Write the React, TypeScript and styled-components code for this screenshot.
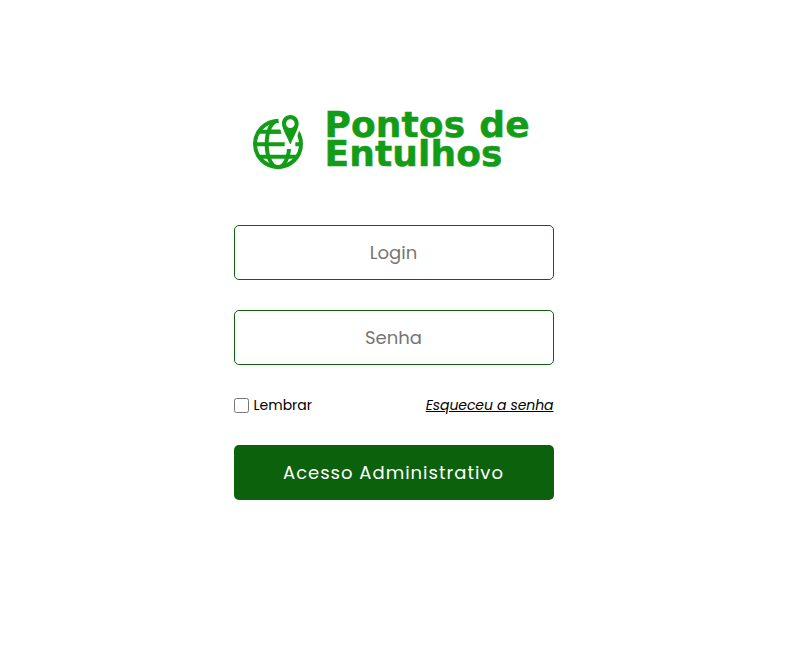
import React from "react";
import styled, { createGlobalStyle, css } from "styled-components";

const GlobalStyle = createGlobalStyle`
  * { box-sizing: border-box; }
  body {
    margin: 0;
    background: #fff;
    color: #000;
    font-family: Poppins, Inter, "Open Sans", sans-serif;
    font-feature-settings: "cv11";
  }
`;

const Page = styled.main`
  display: flex;
  justify-content: center;
  min-height: 100vh;
  padding: 100px 15px 0 0;
`;

const Form = styled.form`
  display: flex;
  flex-direction: column;
  width: 320px;
`;

const Brand = styled.header`
  display: flex;
  height: 125px;
  padding-left: 6.5px;
`;

const Logo = styled.svg`
  flex: none;
  width: 80px;
  height: 80px;
`;

const Title = styled.h1`
  margin: 10px 0 0 4.5px;
  color: #139c17;
  font: 700 36px/29px "DejaVu Sans", sans-serif;
  letter-spacing: 0.1px;
  word-spacing: 1.5px;
  -webkit-text-stroke: 0.5px #139c17;
  white-space: nowrap;
`;

const control = css`
  width: 100%;
  height: 55px;
  border-radius: 5px;
  font-family: inherit;
  font-feature-settings: inherit;
  text-align: center;
`;

const Field = styled.input`
  ${control}
  margin: 0 0 30px;
  padding: 0 15px;
  border: 1px solid #0c610c;
  background: #fff;
  font-size: 18px;
  outline: none;

  &::placeholder { color: #757575; }
`;

const Options = styled.div`
  display: flex;
  align-items: center;
  justify-content: space-between;
  height: 20px;
  margin-bottom: 30px;
  font-size: 14px;
  line-height: 20px;
`;

const Remember = styled.label`
  display: flex;
  align-items: center;
  gap: 5px;
`;

const Checkbox = styled.input`
  width: 15px;
  height: 15px;
  margin: 0;
`;

const Forgot = styled.a`
  color: #000;
  font-style: italic;
  letter-spacing: -0.07px;
  text-decoration: underline;
`;

const Submit = styled.button`
  ${control}
  border: 0;
  background: #0c610c;
  color: #fff;
  font-size: 18px;
  letter-spacing: 1px;
`;

function GlobePin() {
  return (
    <Logo viewBox="0 0 240 240" aria-hidden="true">
      <g fill="none" stroke="#139c17" strokeWidth="12">
        <circle cx="114" cy="132" r="69" />
        <ellipse cx="114" cy="132" rx="34" ry="70" />
        <path d="M56 95H172M44 133H184M56 170H172" />
      </g>
      <path
        d="M114 48H192L174 102L166 125V147H134V127H138L119 89Z"
        fill="#fff"
      />
      <path
        d="M82 95H122"
        fill="none"
        stroke="#139c17"
        strokeWidth="12"
      />
      <path
        d="M151 45C136 45 126 56 126 71C126 85 140 107 150 132H152C162 107 176 85 176 71C176 56 166 45 151 45ZM151 58A13 13 0 1 1 151 84A13 13 0 1 1 151 58Z"
        fill="#139c17"
        fillRule="evenodd"
      />
    </Logo>
  );
}

export default function App() {
  return (
    <>
      <GlobalStyle />
      <Page>
        <Form onSubmit={(event: React.FormEvent) => event.preventDefault()}>
          <Brand>
            <GlobePin />
            <Title>
              Pontos de
              <br />
              Entulhos
            </Title>
          </Brand>
          <Field type="text" placeholder="Login" />
          <Field type="password" placeholder="Senha" />
          <Options>
            <Remember>
              <Checkbox type="checkbox" />
              Lembrar
            </Remember>
            <Forgot href="#">Esqueceu a senha</Forgot>
          </Options>
          <Submit type="submit">Acesso Administrativo</Submit>
        </Form>
      </Page>
    </>
  );
}
